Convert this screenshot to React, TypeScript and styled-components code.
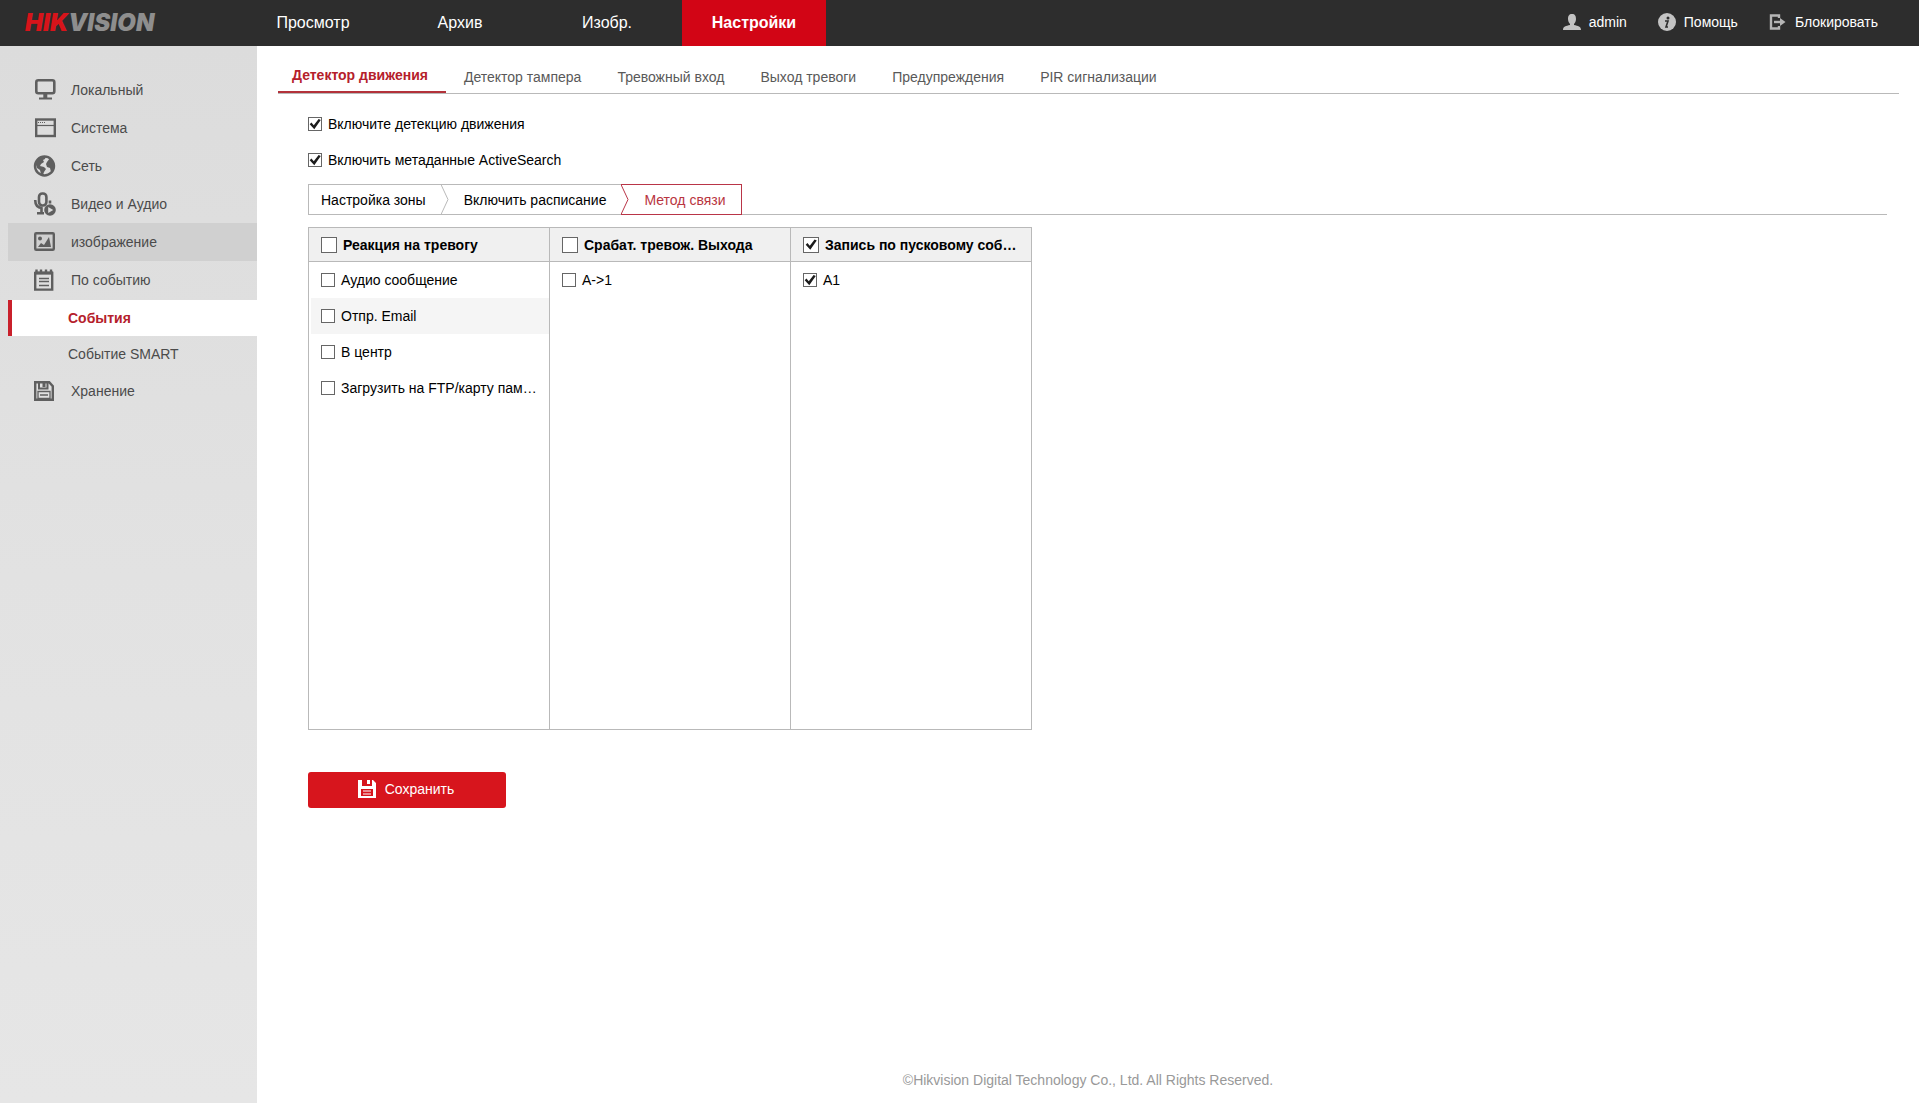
import React, { useState } from 'react';
import styled, { createGlobalStyle, css } from 'styled-components';

const GlobalStyle = createGlobalStyle`
  * { box-sizing: border-box; }
  body {
    margin: 0;
    background: #fff;
    color: #000;
    font: 14px/20px Arial, 'Liberation Sans', sans-serif;
  }
  button { font: inherit; cursor: pointer; }
  a { color: inherit; text-decoration: none; }
  ul { list-style: none; margin: 0; padding: 0; }
`;

const Page = styled.div`
  display: flex;
  flex-direction: column;
  min-height: 100vh;
`;

const Header = styled.header`
  display: flex;
  align-items: stretch;
  height: 46px;
  background: #2d2d2d;
  color: #fff;
`;

const Logo = styled.a`
  flex: 0 0 241px;
  padding-left: 25px;
  font-family: Inter, 'Liberation Sans', sans-serif;
  font-size: 24px;
  line-height: 45px;
  font-weight: 900;
  font-style: italic;
  color: #8e8e8e;
  span { color: #d7141a; }
`;

const MainNav = styled.nav`
  display: flex;
  gap: 3px;
  flex: 1;
`;

const NavLink = styled.a<{ $active?: boolean }>`
  width: 144px;
  text-align: center;
  font-size: 16px;
  line-height: 45px;
  font-weight: ${p => (p.$active ? 'bold' : 'normal')};
  background: ${p => (p.$active ? '#d20515' : 'transparent')};
`;

const UserNav = styled.nav`
  display: flex;
  gap: 31px;
  padding-right: 41px;
`;

const UserLink = styled.a`
  display: flex;
  align-items: center;
  gap: 8px;
  line-height: 44px;
  padding-bottom: 2px;
  svg { width: 18px; height: 18px; }
`;

const Body = styled.div`
  display: flex;
  flex: 1;
`;

const Sidebar = styled.nav`
  flex: 0 0 257px;
  padding: 25px 0 0 8px;
  background: linear-gradient(#dcdcdc, #e2e2e2 50%, #e6e6e6);
  color: #4b4b4b;
`;

const SideLink = styled.a<{ $hover?: boolean }>`
  display: flex;
  align-items: center;
  gap: 15px;
  height: 38px;
  padding-left: 25px;
  background: ${p => (p.$hover ? '#d0d0d0' : 'transparent')};
  svg { width: 23px; height: 24px; color: #5f5f5f; }
`;

const SubList = styled.ul`
  padding-top: 1px;
`;

const SubLink = styled.a<{ $active?: boolean }>`
  display: block;
  padding-left: 56px;
  border-left: 4px solid transparent;
  line-height: 36px;
  ${p =>
    p.$active &&
    css`
      border-left-color: #c9202b;
      background: #fff;
      color: #b5202b;
      font-weight: bold;
    `}
`;

const Main = styled.main`
  display: flex;
  flex-direction: column;
  flex: 1;
  min-width: 0;
`;

const Tabs = styled.div`
  display: flex;
  align-items: flex-end;
  margin: 12px 20px 0 21px;
  height: 36px;
  border-bottom: 1px solid #b9b9b9;
`;

const Tab = styled.button<{ $active?: boolean }>`
  padding: 0 18px;
  border: 0;
  background: none;
  color: #595959;
  line-height: 32px;
  ${p =>
    p.$active &&
    css`
      padding: 0 18px 0 14px;
      border-bottom: 2px solid #b3323a;
      color: #b5202b;
      font-weight: bold;
    `}
`;

const Content = styled.div`
  flex: 1;
  padding: 12px 32px 0 51px;
`;

const CheckLabel = styled.label`
  display: flex;
  align-items: center;
  gap: 6px;
  height: 36px;
  white-space: nowrap;
`;

const Box = styled.input<{ $large?: boolean }>`
  appearance: none;
  flex: none;
  width: ${p => (p.$large ? 16 : 14)}px;
  height: ${p => (p.$large ? 16 : 14)}px;
  margin: 0;
  border: 1px solid #666;
  background: #fff;
  display: grid;
  place-items: center;
  &:checked::before {
    content: '';
    width: 12px;
    height: 12px;
    background: #1c1c1c;
    clip-path: polygon(6% 52%, 20% 38%, 40% 60%, 80% 8%, 98% 16%, 44% 94%);
  }
`;

const Steps = styled.div`
  display: flex;
  height: 31px;
  margin-top: 6px;
  border-bottom: 1px solid #b9b9b9;
`;

const Step = styled.button<{ $active?: boolean; $first?: boolean }>`
  height: 31px;
  padding: 0 15px 0 ${p => (p.$first ? 12 : 15)}px;
  border: solid ${p => (p.$active ? '#b93547' : '#b9b9b9')};
  border-width: 1px ${p => (p.$active ? 1 : 0)}px 1px ${p => (p.$first ? 1 : 0)}px;
  background: #fff;
  color: ${p => (p.$active ? '#b93541' : '#000')};
`;

const Chevron = styled.svg<{ $active?: boolean }>`
  flex: none;
  width: 8px;
  height: 31px;
  fill: none;
  stroke: ${p => (p.$active ? '#b93547' : '#b9b9b9')};
`;

const Methods = styled.div`
  display: grid;
  grid-template-columns: repeat(3, 240px);
  gap: 1px;
  width: max-content;
  margin-top: 12px;
  border: 1px solid #b9b9b9;
  background: #b9b9b9;
`;

const Column = styled.section`
  min-height: 501px;
  background: #fff;
`;

const ColumnHead = styled.div`
  padding-left: 12px;
  border-bottom: 1px solid #b9b9b9;
  background: #f0f0f0;
  font-weight: bold;
  ${CheckLabel} { height: 33px; }
`;

const Option = styled.li<{ $hover?: boolean }>`
  margin-left: 2px;
  padding-left: 10px;
  background: ${p => (p.$hover ? '#f5f5f5' : 'transparent')};
`;

const SaveButton = styled.button`
  display: flex;
  align-items: center;
  justify-content: center;
  gap: 9px;
  width: 198px;
  height: 36px;
  margin-top: 42px;
  padding: 0 8px 2px 6px;
  border: 0;
  border-radius: 3px;
  background: #d7151d;
  color: #fff;
  svg { width: 18px; height: 18px; }
`;

const Footer = styled.footer`
  padding: 12px 0 13px;
  text-align: center;
  color: #999;
`;

type IconProps = { name: string };

function Icon({ name }: IconProps) {
  const common = { viewBox: '0 0 23 24', fill: 'none', stroke: 'currentColor', 'aria-hidden': true } as const;
  switch (name) {
    case 'monitor':
      return (
        <svg {...common} strokeWidth="2.6">
          <rect x="3.3" y="2.3" width="18" height="13" rx="2" />
          <path d="M12.3 15v5" strokeWidth="4" />
          <path d="M6 20.5h13" strokeWidth="2" />
        </svg>
      );
    case 'window':
      return (
        <svg {...common} strokeWidth="2.4">
          <rect x="3.2" y="3.5" width="18.6" height="16.5" />
          <path d="M3 9.5h19" strokeWidth="1.2" />
          <path d="M5 6.5h8" strokeWidth="1" strokeDasharray="1 1" />
        </svg>
      );
    case 'globe':
      return (
        <svg {...common}>
          <circle cx="11.5" cy="12" r="9.5" strokeWidth="2.4" />
          <path
            fill="currentColor"
            stroke="none"
            d="M3 7l4-4 6-1-1 3-2 1 1 2-3 2-1 2 4 1 2 2-2 3-1 3-2-1-1-4-3-2-1-3zM14 8l3-4 4 5 1 4-2 4-2 1-1-4-3-1-1-3z"
          />
        </svg>
      );
    case 'mic':
      return (
        <svg {...common} strokeWidth="2.6">
          <rect x="6" y="1.5" width="7.4" height="12" rx="3.4" />
          <path d="M2.2 8c0 5 2 8 7.5 8M17 8.5v3M8.5 16v4M4 21.2h7" />
          <circle cx="17" cy="18" r="5.8" fill="currentColor" stroke="none" />
          <path d="M15.2 15l5 3-5 3z" fill="#dcdcdc" stroke="none" />
        </svg>
      );
    case 'image':
      return (
        <svg {...common} strokeWidth="2.4">
          <rect x="2.2" y="3.2" width="18.6" height="16.6" rx="1" />
          <path fill="currentColor" stroke="none" d="M5 17l3-4 3 2 5-8 2 10z" />
          <circle cx="7" cy="8.5" r="2" fill="currentColor" stroke="none" />
        </svg>
      );
    case 'event':
      return (
        <svg {...common} strokeWidth="2.4">
          <path d="M2.2 5h17v16.6h-17z" />
          <path d="M2 5h18" strokeWidth="3" />
          <path d="M3.5 1.5v4M8 1.5v4M13 1.5v4M18 1.5v4" />
          <path d="M6 10.5h10M6 13.5h10M6 17.5h10" strokeWidth="1.3" />
        </svg>
      );
    default:
      return (
        <svg {...common} strokeWidth="2.4">
          <path d="M2.2 3.2h14l3.6 4v13.6H2.2z" />
          <path d="M6 3v6.5h8.5V3" strokeWidth="2" />
          <path d="M11 4v4" strokeWidth="3" />
          <path d="M5 12.5h12v7H5zM7 16h8" strokeWidth="1.3" />
        </svg>
      );
  }
}

const UserIcon = () => (
  <svg viewBox="0 0 18 18" fill="#c3c3c3" aria-hidden="true">
    <path d="M9 1c3 0 4 2 4 5 0 2-1 4-2 5v1c4 1 7 1 7 5H0c0-4 3-4 7-5v-1C6 10 5 8 5 6c0-3 1-5 4-5z" />
  </svg>
);

const InfoIcon = () => (
  <svg viewBox="0 0 18 18" aria-hidden="true">
    <circle cx="9" cy="9" r="9" fill="#c3c3c3" />
    <circle cx="10" cy="5" r="1.5" fill="#2d2d2d" />
    <path d="M7 8h3l-2 6h2" fill="none" stroke="#2d2d2d" strokeWidth="1.6" />
  </svg>
);

const ExitIcon = () => (
  <svg viewBox="0 0 18 18" fill="none" stroke="#b5b5b5" strokeWidth="2.4" aria-hidden="true">
    <path d="M10 5V2.5H2v13h8V13" />
    <path d="M5 9h7" />
    <path d="M11 5l5.5 4-5.5 4z" fill="#b5b5b5" stroke="none" />
  </svg>
);

const SaveIcon = () => (
  <svg viewBox="0 0 18 18" aria-hidden="true">
    <path fill="#fff" fillRule="evenodd" d="M0 0h15l3 3v15H0zM4 0v6h10V0h-2v4H9V0zM3 9v7h12V9z" />
    <path d="M5 11h8M5 14h8" stroke="#fff" strokeWidth="1" />
  </svg>
);

function Check({ label, checked = false, large = false }: { label: string; checked?: boolean; large?: boolean }) {
  const [on, setOn] = useState(checked);
  return (
    <CheckLabel>
      <Box type="checkbox" $large={large} checked={on} onChange={() => setOn(!on)} />
      <span>{label}</span>
    </CheckLabel>
  );
}

const topMenu = ['Просмотр', 'Архив', 'Изобр.', 'Настройки'];
const sideMenu = [
  { icon: 'monitor', label: 'Локальный' },
  { icon: 'window', label: 'Система' },
  { icon: 'globe', label: 'Сеть' },
  { icon: 'mic', label: 'Видео и Аудио' },
  { icon: 'image', label: 'изображение', hover: true },
  { icon: 'event', label: 'По событию', children: ['События', 'Событие SMART'] },
  { icon: 'disk', label: 'Хранение' },
];
const tabs = ['Детектор движения', 'Детектор тампера', 'Тревожный вход', 'Выход тревоги', 'Предупреждения', 'PIR сигнализации'];
const columns = [
  {
    title: 'Реакция на тревогу',
    checked: false,
    options: ['Аудио сообщение', 'Отпр. Email', 'В центр', 'Загрузить на FTP/карту пам…'],
  },
  { title: 'Срабат. тревож. Выхода', checked: false, options: ['A->1'] },
  { title: 'Запись по пусковому соб…', checked: true, options: ['A1'] },
];

export default function App() {
  return (
    <Page>
      <GlobalStyle />
      <Header>
        <Logo href="#"><span>HIK</span>VISION</Logo>
        <MainNav>
          {topMenu.map((item, i) => (
            <NavLink key={item} href="#" $active={i === 3}>{item}</NavLink>
          ))}
        </MainNav>
        <UserNav>
          <UserLink href="#"><UserIcon />admin</UserLink>
          <UserLink href="#"><InfoIcon />Помощь</UserLink>
          <UserLink href="#"><ExitIcon />Блокировать</UserLink>
        </UserNav>
      </Header>
      <Body>
        <Sidebar>
          <ul>
            {sideMenu.map(item => (
              <li key={item.label}>
                <SideLink href="#" $hover={item.hover}><Icon name={item.icon} />{item.label}</SideLink>
                {item.children && (
                  <SubList>
                    {item.children.map((sub, i) => (
                      <li key={sub}><SubLink href="#" $active={i === 0}>{sub}</SubLink></li>
                    ))}
                  </SubList>
                )}
              </li>
            ))}
          </ul>
        </Sidebar>
        <Main>
          <Tabs>
            {tabs.map((tab, i) => (
              <Tab key={tab} type="button" $active={i === 0}>{tab}</Tab>
            ))}
          </Tabs>
          <Content>
            <Check label="Включите детекцию движения" checked />
            <Check label="Включить метаданные ActiveSearch" checked />
            <Steps>
              <Step type="button" $first>Настройка зоны</Step>
              <Chevron viewBox="0 0 8 31"><path d="M0 .5L7 15.5L0 30.5" /><path d="M0 .5H8M0 30.5H8" /></Chevron>
              <Step type="button">Включить расписание</Step>
              <Chevron viewBox="0 0 8 31" $active><path d="M0 .5L7 15.5L0 30.5" /><path d="M0 .5H8M0 30.5H8" /></Chevron>
              <Step type="button" $active>Метод связи</Step>
            </Steps>
            <Methods>
              {columns.map(col => (
                <Column key={col.title}>
                  <ColumnHead><Check label={col.title} checked={col.checked} large /></ColumnHead>
                  <ul>
                    {col.options.map(opt => (
                      <Option key={opt} $hover={opt === 'Отпр. Email'}>
                        <Check label={opt} checked={col.checked} />
                      </Option>
                    ))}
                  </ul>
                </Column>
              ))}
            </Methods>
            <SaveButton type="button"><SaveIcon />Сохранить</SaveButton>
          </Content>
          <Footer>©Hikvision Digital Technology Co., Ltd. All Rights Reserved.</Footer>
        </Main>
      </Body>
    </Page>
  );
}
